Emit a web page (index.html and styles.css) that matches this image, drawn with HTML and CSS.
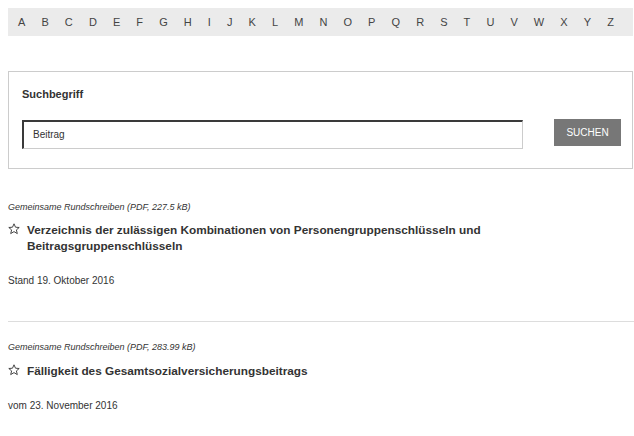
FILE: index.html
```html
<!DOCTYPE html>
<html lang="de">
<head>
<meta charset="utf-8">
<title>Rundschreiben</title>
<link rel="stylesheet" href="styles.css">
</head>
<body>
<div class="page">
  <nav class="alpha">
    <a>A</a><a>B</a><a>C</a><a>D</a><a>E</a><a>F</a><a>G</a><a>H</a><a>I</a><a>J</a><a>K</a><a>L</a><a>M</a><a>N</a><a>O</a><a>P</a><a>Q</a><a>R</a><a>S</a><a>T</a><a>U</a><a>V</a><a>W</a><a>X</a><a>Y</a><a>Z</a>
  </nav>

  <form class="search">
    <label class="search-label">Suchbegriff</label>
    <div class="search-row">
      <div class="search-input">Beitrag</div>
      <button class="search-btn" type="button">SUCHEN</button>
    </div>
  </form>

  <div class="item first">
    <div class="meta">Gemeinsame Rundschreiben (PDF, 227.5 kB)</div>
    <div class="title">
      <svg class="star" width="12" height="12" viewBox="0 0 12 12"><polygon points="6,0.8 7.5,4.2 11.2,4.5 8.4,6.9 9.3,10.6 6,8.6 2.7,10.6 3.6,6.9 0.8,4.5 4.5,4.2" fill="none" stroke="#333" stroke-width="0.9" stroke-linejoin="round"/></svg>
      <span class="title-text">Verzeichnis der zulässigen Kombinationen von Personengruppenschlüsseln und Beitragsgruppenschlüsseln</span>
    </div>
    <div class="date">Stand 19. Oktober 2016</div>
  </div>

  <div class="item">
    <div class="meta">Gemeinsame Rundschreiben (PDF, 283.99 kB)</div>
    <div class="title">
      <svg class="star" width="12" height="12" viewBox="0 0 12 12"><polygon points="6,0.8 7.5,4.2 11.2,4.5 8.4,6.9 9.3,10.6 6,8.6 2.7,10.6 3.6,6.9 0.8,4.5 4.5,4.2" fill="none" stroke="#333" stroke-width="0.9" stroke-linejoin="round"/></svg>
      <span class="title-text">Fälligkeit des Gesamtsozialversicherungsbeitrags</span>
    </div>
    <div class="date">vom 23. November 2016</div>
  </div>
</div>
</body>
</html>
```

FILE: styles.css
```css
html, body {
  margin: 0;
  padding: 0;
  background: #fff;
}

body {
  font-family: "Liberation Sans", Arial, sans-serif;
  color: #333;
}

.page {
  margin: 8px 0 0 8px;
  width: 625px;
}

.alpha {
  display: flex;
  justify-content: space-between;
  align-items: center;
  height: 28px;
  padding: 0 19px 0 10px;
  background: #ebebeb;
  font-size: 11px;
  color: #444;
}

.alpha a {
  display: block;
}

.search {
  margin-top: 35px;
  border: 1px solid #ccc;
  padding: 14px 11px 19px 13px;
}

.search-label {
  display: block;
  font-size: 11px;
  font-weight: bold;
  line-height: 16px;
  color: #333;
}

.search-row {
  display: flex;
  align-items: flex-start;
  gap: 31px;
  margin-top: 18px;
}

.search-input {
  box-sizing: border-box;
  width: 501px;
  height: 29px;
  border-top: 2px solid #3a3a3a;
  border-left: 2px solid #3a3a3a;
  border-right: 1px solid #ccc;
  border-bottom: 1px solid #ccc;
  padding: 0 9px;
  font-size: 10px;
  line-height: 26px;
  color: #333;
}

.search-btn {
  box-sizing: border-box;
  width: 67px;
  height: 27px;
  margin-top: -1px;
  border: 0;
  background: #777;
  color: #fff;
  font-family: "Liberation Sans", Arial, sans-serif;
  font-size: 10px;
  padding: 0;
}

.item {
  border-top: 1px solid #ddd;
  padding: 19px 0 33px;
  margin-right: -1px;
}

.item.first {
  border-top: 0;
  padding-top: 32px;
  padding-bottom: 33px;
}

.meta {
  font-size: 9px;
  font-style: italic;
  line-height: 12px;
  color: #333;
}

.title {
  display: flex;
  align-items: flex-start;
  margin-top: 9px;
  font-size: 11.8px;
  font-weight: bold;
  line-height: 16px;
  color: #333;
}

.item:not(.first) .title {
  margin-top: 10px;
}

.star {
  flex: none;
  width: 12px;
  height: 12px;
  margin: 1px 7px 0 0;
}

.title-text {
  display: block;
  width: 606px;
}

.date {
  margin-top: 20px;
  font-size: 10px;
  line-height: 14px;
  color: #333;
}
```
